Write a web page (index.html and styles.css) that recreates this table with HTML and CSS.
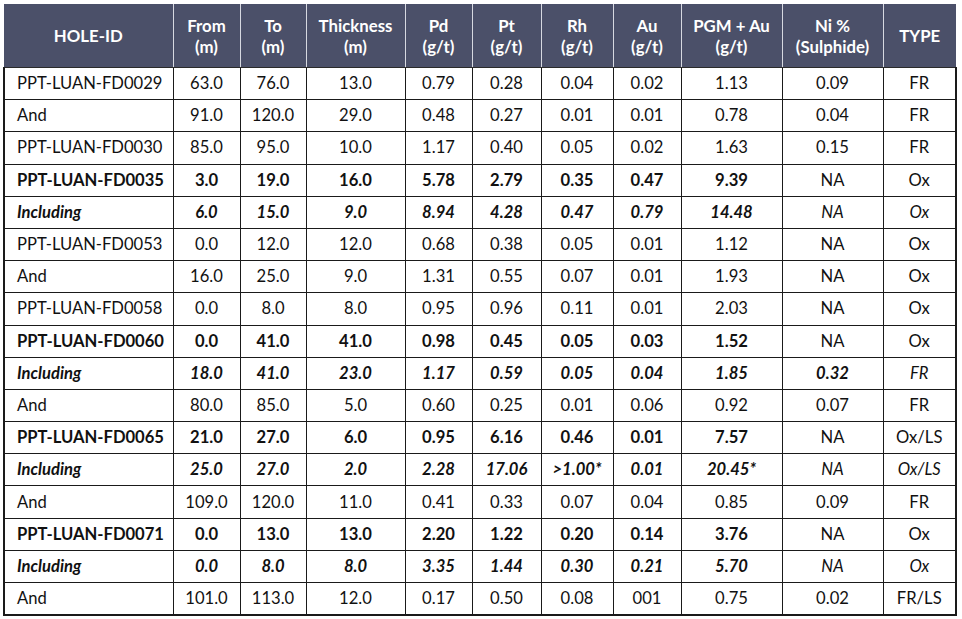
FILE: index.html
```html
<!DOCTYPE html>
<html>
<head>
<meta charset="utf-8">
<link rel="stylesheet" href="styles.css">
</head>
<body>
<table class="results">
<colgroup>
<col class="c-id"><col class="c-from"><col class="c-to"><col class="c-th"><col class="c-pd"><col class="c-pt"><col class="c-rh"><col class="c-au"><col class="c-pgm"><col class="c-ni"><col class="c-type">
</colgroup>
<thead>
<tr>
<th>HOLE-ID</th><th>From<br>(m)</th><th>To<br>(m)</th><th>Thickness<br>(m)</th><th>Pd<br>(g/t)</th><th>Pt<br>(g/t)</th><th>Rh<br>(g/t)</th><th>Au<br>(g/t)</th><th>PGM + Au<br>(g/t)</th><th>Ni %<br>(Sulphide)</th><th>TYPE</th>
</tr>
</thead>
<tbody>
<tr><td>PPT-LUAN-FD0029</td><td>63.0</td><td>76.0</td><td>13.0</td><td>0.79</td><td>0.28</td><td>0.04</td><td>0.02</td><td>1.13</td><td>0.09</td><td>FR</td></tr>
<tr><td>And</td><td>91.0</td><td>120.0</td><td>29.0</td><td>0.48</td><td>0.27</td><td>0.01</td><td>0.01</td><td>0.78</td><td>0.04</td><td>FR</td></tr>
<tr><td>PPT-LUAN-FD0030</td><td>85.0</td><td>95.0</td><td>10.0</td><td>1.17</td><td>0.40</td><td>0.05</td><td>0.02</td><td>1.63</td><td>0.15</td><td>FR</td></tr>
<tr class="b"><td>PPT-LUAN-FD0035</td><td>3.0</td><td>19.0</td><td>16.0</td><td>5.78</td><td>2.79</td><td>0.35</td><td>0.47</td><td>9.39</td><td class="n">NA</td><td class="n">Ox</td></tr>
<tr class="bi"><td>Including</td><td>6.0</td><td>15.0</td><td>9.0</td><td>8.94</td><td>4.28</td><td>0.47</td><td>0.79</td><td>14.48</td><td class="n">NA</td><td class="n">Ox</td></tr>
<tr><td>PPT-LUAN-FD0053</td><td>0.0</td><td>12.0</td><td>12.0</td><td>0.68</td><td>0.38</td><td>0.05</td><td>0.01</td><td>1.12</td><td>NA</td><td>Ox</td></tr>
<tr><td>And</td><td>16.0</td><td>25.0</td><td>9.0</td><td>1.31</td><td>0.55</td><td>0.07</td><td>0.01</td><td>1.93</td><td>NA</td><td>Ox</td></tr>
<tr><td>PPT-LUAN-FD0058</td><td>0.0</td><td>8.0</td><td>8.0</td><td>0.95</td><td>0.96</td><td>0.11</td><td>0.01</td><td>2.03</td><td>NA</td><td>Ox</td></tr>
<tr class="b"><td>PPT-LUAN-FD0060</td><td>0.0</td><td>41.0</td><td>41.0</td><td>0.98</td><td>0.45</td><td>0.05</td><td>0.03</td><td>1.52</td><td class="n">NA</td><td class="n">Ox</td></tr>
<tr class="bi"><td>Including</td><td>18.0</td><td>41.0</td><td>23.0</td><td>1.17</td><td>0.59</td><td>0.05</td><td>0.04</td><td>1.85</td><td>0.32</td><td class="n">FR</td></tr>
<tr><td>And</td><td>80.0</td><td>85.0</td><td>5.0</td><td>0.60</td><td>0.25</td><td>0.01</td><td>0.06</td><td>0.92</td><td>0.07</td><td>FR</td></tr>
<tr class="b"><td>PPT-LUAN-FD0065</td><td>21.0</td><td>27.0</td><td>6.0</td><td>0.95</td><td>6.16</td><td>0.46</td><td>0.01</td><td>7.57</td><td class="n">NA</td><td class="n">Ox/LS</td></tr>
<tr class="bi"><td>Including</td><td>25.0</td><td>27.0</td><td>2.0</td><td>2.28</td><td>17.06</td><td>&gt;1.00*</td><td>0.01</td><td>20.45*</td><td class="n">NA</td><td class="n">Ox/LS</td></tr>
<tr><td>And</td><td>109.0</td><td>120.0</td><td>11.0</td><td>0.41</td><td>0.33</td><td>0.07</td><td>0.04</td><td>0.85</td><td>0.09</td><td>FR</td></tr>
<tr class="b"><td>PPT-LUAN-FD0071</td><td>0.0</td><td>13.0</td><td>13.0</td><td>2.20</td><td>1.22</td><td>0.20</td><td>0.14</td><td>3.76</td><td class="n">NA</td><td class="n">Ox</td></tr>
<tr class="bi"><td>Including</td><td>0.0</td><td>8.0</td><td>8.0</td><td>3.35</td><td>1.44</td><td>0.30</td><td>0.21</td><td>5.70</td><td class="n">NA</td><td class="n">Ox</td></tr>
<tr><td>And</td><td>101.0</td><td>113.0</td><td>12.0</td><td>0.17</td><td>0.50</td><td>0.08</td><td>001</td><td>0.75</td><td>0.02</td><td>FR/LS</td></tr>
</tbody>
</table>
</body>
</html>
```
FILE: styles.css
```css
html, body {
  margin: 0;
  padding: 0;
  background: #ffffff;
}
body {
  padding: 4px 0 0 3px;
  font-family: Lato, "Liberation Sans", sans-serif;
  color: #111111;
}
.results {
  border-collapse: collapse;
  table-layout: fixed;
  width: 952px;
  font-size: 16.6px;
}
.c-id { width: 169px; }
.c-from { width: 67px; }
.c-to { width: 66px; }
.c-th { width: 99px; }
.c-pd { width: 67px; }
.c-pt { width: 69px; }
.c-rh { width: 72px; }
.c-au { width: 68px; }
.c-pgm { width: 101px; }
.c-ni { width: 101px; }
.c-type { width: 73px; }

.results th {
  background: #4b5069;
  color: #ffffff;
  font-weight: 700;
  font-size: 16.8px;
  line-height: 21px;
  height: 63px;
  padding: 0;
  text-align: center;
  vertical-align: middle;
  border-left: 1px solid #d6d8e0;
  border-right: 1px solid #d6d8e0;
  border-top: none;
  border-bottom: 1px solid #2a2a2a;
}
.results th:first-child { border-left: none; }
.results th:last-child { border-right: none; }

.results td {
  height: 31.2px;
  padding: 0;
  text-align: center;
  vertical-align: middle;
  border: 1.5px solid #1a1a1a;
  line-height: 19px;
}
.results td:first-child {
  text-align: left;
  padding-left: 12px;
  border-left: 2px solid #1a1a1a;
}
.results td:last-child { border-right: 2px solid #1a1a1a; }
.results tbody tr:last-child td { border-bottom: 2px solid #1a1a1a; }

.results tr.b td { font-weight: 700; }
.results tr.bi td { font-weight: 700; font-style: italic; }
.results tr.b td.n { font-weight: 400; }
.results tr.bi td.n { font-weight: 400; }
```
